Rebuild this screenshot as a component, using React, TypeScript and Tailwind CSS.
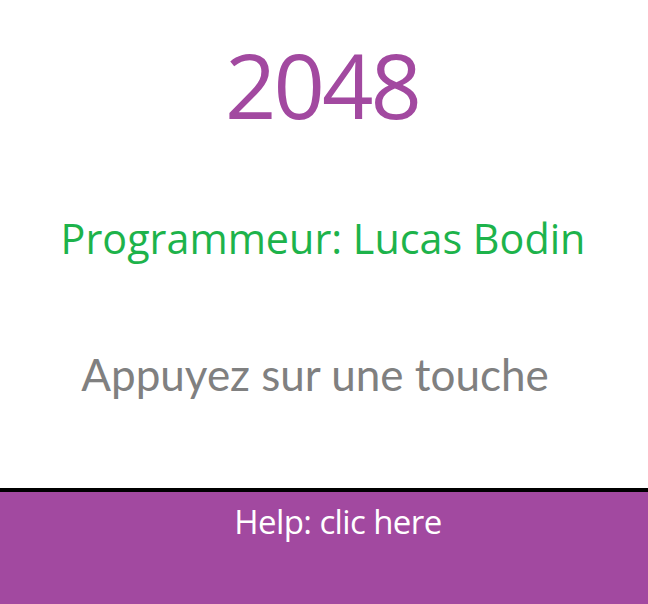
export default function App() {
  return (
    <div className="w-[648px] h-[604px] bg-white flex flex-col overflow-hidden">
      <div className="h-[488px] flex flex-col items-center">
        <h1 className="mt-[34px] ml-[-4px] h-[100px] leading-[100px] text-[90px] text-[#a249a0] font-['Open_Sans',sans-serif] tracking-[-3px]">
          2048
        </h1>
        <p className="mt-[79px] ml-[-2px] leading-[50px] text-[41.3px] text-[#1db34b] font-['Open_Sans',sans-serif]">
          Programmeur: Lucas Bodin
        </p>
        <p className="mt-[86px] ml-[-18px] leading-[50px] text-[44px] text-[#808080] font-['Lato',sans-serif]">
          Appuyez sur une touche
        </p>
      </div>
      <div className="h-[4px] bg-black" />
      <div className="flex-1 bg-[#a249a0] flex justify-center">
        <button className="mt-[9px] ml-[28px] h-[42px] leading-[42px] text-[33px] text-white font-['Open_Sans',sans-serif] tracking-[-0.6px]">
          Help: clic here
        </button>
      </div>
    </div>
  );
}
